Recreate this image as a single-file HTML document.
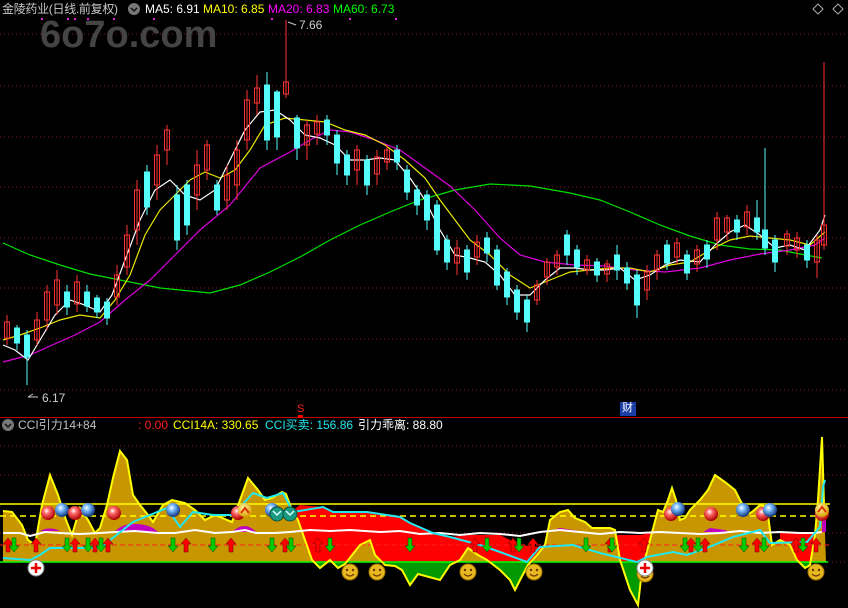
<!DOCTYPE html>
<html><head><meta charset="utf-8"><style>
html,body{margin:0;padding:0;background:#000;}
body{width:848px;height:608px;overflow:hidden;position:relative;font-family:"Liberation Sans","Noto Sans CJK SC",sans-serif;}
.t{position:absolute;font-size:12px;white-space:nowrap;line-height:14px;}
</style></head><body>
<svg width="848" height="608" style="position:absolute;left:0;top:0">
<defs>
<clipPath id="up"><rect x="0" y="420" width="848" height="142"/></clipPath>
<clipPath id="dn"><rect x="0" y="562" width="848" height="46"/></clipPath>
<radialGradient id="rb" cx="40%" cy="35%" r="65%"><stop offset="0" stop-color="#fff"/><stop offset=".35" stop-color="#f66"/><stop offset="1" stop-color="#a00"/></radialGradient>
<radialGradient id="bb" cx="40%" cy="35%" r="65%"><stop offset="0" stop-color="#fff"/><stop offset=".35" stop-color="#7bf"/><stop offset="1" stop-color="#137"/></radialGradient>
<radialGradient id="yb" cx="40%" cy="35%" r="65%"><stop offset="0" stop-color="#fff6a0"/><stop offset="1" stop-color="#d9a000"/></radialGradient>
<g id="smile"><circle r="8" fill="#e8b820" stroke="#a07000"/><circle cx="-3" cy="-2" r="1.2" fill="#630"/><circle cx="3" cy="-2" r="1.2" fill="#630"/><path d="M-4,2 Q0,6 4,2" stroke="#630" fill="none" stroke-width="1.2"/></g>
<g id="plus"><circle r="8" fill="#fff" stroke="#888"/><path d="M-5,0H5M0,-5V5" stroke="#e00" stroke-width="2.5"/></g>
<g id="ua"><path d="M0,-7 L5,-1 H2 V7 H-2 V-1 H-5Z" fill="#f00" stroke="#600" stroke-width=".5"/></g>
<g id="da"><path d="M0,7 L5,1 H2 V-7 H-2 V1 H-5Z" fill="#0c0" stroke="#040" stroke-width=".5"/></g>
</defs>
<g stroke="#8a1a1a" stroke-dasharray="1 3">
<line x1="0" y1="34" x2="848" y2="34"/><line x1="0" y1="86" x2="848" y2="86"/><line x1="0" y1="137" x2="848" y2="137"/><line x1="0" y1="187" x2="848" y2="187"/><line x1="0" y1="238" x2="848" y2="238"/><line x1="0" y1="288" x2="848" y2="288"/><line x1="0" y1="339" x2="848" y2="339"/><line x1="0" y1="390" x2="848" y2="390"/>
<line x1="0" y1="446" x2="848" y2="446"/><line x1="0" y1="475" x2="848" y2="475"/><line x1="0" y1="533" x2="848" y2="533"/><line x1="0" y1="562" x2="848" y2="562"/>
</g>
<text x="40" y="47" font-family="Liberation Sans" font-weight="bold" font-size="38" fill="#444">6o7o.com</text>
<g fill="#e020e0"><rect x="41" y="18" width="2" height="2"/><rect x="67" y="18" width="2" height="2"/><rect x="74" y="18" width="2" height="2"/><rect x="87" y="18" width="2" height="2"/><rect x="113" y="18" width="2" height="2"/><rect x="153" y="18" width="2" height="2"/><rect x="271" y="18" width="2" height="2"/><rect x="349" y="18" width="2" height="2"/><rect x="395" y="18" width="2" height="2"/></g>
<polyline fill="none" stroke="#00e000" stroke-width="1.2" points="3,243 30,255 60,265 90,274 120,280 160,288 210,293 240,285 270,272 300,257 330,240 360,225 390,212 420,200 455,190 490,184 530,186 570,193 600,200 630,212 660,225 690,236 720,245 750,249 780,250 800,254 822,258"/>
<polyline fill="none" stroke="#e000e0" stroke-width="1.2" points="3,362 30,355 50,346 75,335 100,322 125,300 150,280 175,255 200,230 230,205 260,168 290,152 310,140 330,130 350,132 375,140 400,150 425,168 450,186 475,210 500,238 520,255 545,262 575,265 605,266 635,270 665,272 700,268 730,260 760,254 790,250 815,245 825,238"/>
<polyline fill="none" stroke="#e8e800" stroke-width="1.2" points="3,340 20,335 40,328 60,320 80,315 100,318 115,300 130,275 145,235 160,210 175,195 190,180 205,172 220,178 235,170 250,150 265,125 285,118 305,120 325,122 345,130 365,135 385,145 405,160 425,178 440,200 455,220 470,240 490,255 510,275 530,288 550,280 570,272 590,270 610,268 630,268 650,272 670,265 690,262 710,250 730,240 750,236 770,238 790,240 810,245 825,232"/>
<polyline fill="none" stroke="#fff" stroke-width="1.2" points="3,345 15,350 28,360 40,340 55,315 70,300 85,305 100,312 112,295 125,260 140,220 155,190 170,180 185,195 200,200 215,190 230,160 245,130 260,112 275,110 290,120 305,135 320,138 335,145 350,160 365,160 380,158 395,160 410,178 425,200 440,230 455,255 470,258 485,262 500,275 515,295 530,295 545,280 560,268 575,268 590,270 605,270 620,268 635,280 650,275 665,265 680,260 700,262 715,245 730,232 745,225 760,235 775,248 790,245 805,250 820,230 825,215"/>
<g stroke-width="1">
<g stroke="#ff3232" fill="none">
<line x1="7" y1="315" x2="7" y2="345"/><rect x="4.5" y="322" width="5" height="16"/>
<line x1="37" y1="312" x2="37" y2="345"/><rect x="34.5" y="320" width="5" height="20"/>
<line x1="47" y1="285" x2="47" y2="330"/><rect x="44.5" y="292" width="5" height="28"/>
<line x1="57" y1="270" x2="57" y2="315"/><rect x="54.5" y="280" width="5" height="25"/>
<line x1="77" y1="275" x2="77" y2="312"/><rect x="74.5" y="282" width="5" height="22"/>
<line x1="117" y1="265" x2="117" y2="305"/><rect x="114.5" y="275" width="5" height="22"/>
<line x1="127" y1="225" x2="127" y2="275"/><rect x="124.5" y="235" width="5" height="32"/>
<line x1="137" y1="180" x2="137" y2="245"/><rect x="134.5" y="190" width="5" height="40"/>
<line x1="157" y1="145" x2="157" y2="200"/><rect x="154.5" y="155" width="5" height="30"/>
<line x1="167" y1="125" x2="167" y2="165"/><rect x="164.5" y="130" width="5" height="20"/>
<line x1="197" y1="150" x2="197" y2="210"/><rect x="194.5" y="165" width="5" height="30"/>
<line x1="207" y1="140" x2="207" y2="180"/><rect x="204.5" y="145" width="5" height="25"/>
<line x1="227" y1="165" x2="227" y2="210"/><rect x="224.5" y="175" width="5" height="25"/>
<line x1="237" y1="140" x2="237" y2="200"/><rect x="234.5" y="150" width="5" height="35"/>
<line x1="247" y1="90" x2="247" y2="150"/><rect x="244.5" y="100" width="5" height="40"/>
<line x1="257" y1="75" x2="257" y2="115"/><rect x="254.5" y="88" width="5" height="15"/>
<line x1="286" y1="20" x2="286" y2="98"/><rect x="283.5" y="82" width="5" height="12"/>
<line x1="307" y1="120" x2="307" y2="160"/><rect x="304.5" y="125" width="5" height="20"/>
<line x1="317" y1="115" x2="317" y2="145"/><rect x="314.5" y="122" width="5" height="12"/>
<line x1="357" y1="145" x2="357" y2="185"/><rect x="354.5" y="150" width="5" height="20"/>
<line x1="377" y1="150" x2="377" y2="185"/><rect x="374.5" y="157" width="5" height="17"/>
<line x1="387" y1="145" x2="387" y2="170"/><rect x="384.5" y="150" width="5" height="12"/>
<line x1="457" y1="240" x2="457" y2="275"/><rect x="454.5" y="248" width="5" height="15"/>
<line x1="477" y1="235" x2="477" y2="265"/><rect x="474.5" y="242" width="5" height="15"/>
<line x1="537" y1="280" x2="537" y2="305"/><rect x="534.5" y="285" width="5" height="15"/>
<line x1="547" y1="258" x2="547" y2="285"/><rect x="544.5" y="262" width="5" height="15"/>
<line x1="557" y1="250" x2="557" y2="275"/><rect x="554.5" y="255" width="5" height="12"/>
<line x1="587" y1="255" x2="587" y2="275"/><rect x="584.5" y="260" width="5" height="10"/>
<line x1="607" y1="260" x2="607" y2="282"/><rect x="604.5" y="264" width="5" height="10"/>
<line x1="647" y1="265" x2="647" y2="300"/><rect x="644.5" y="272" width="5" height="18"/>
<line x1="657" y1="250" x2="657" y2="280"/><rect x="654.5" y="255" width="5" height="15"/>
<line x1="677" y1="238" x2="677" y2="265"/><rect x="674.5" y="243" width="5" height="14"/>
<line x1="697" y1="245" x2="697" y2="272"/><rect x="694.5" y="250" width="5" height="14"/>
<line x1="717" y1="212" x2="717" y2="250"/><rect x="714.5" y="218" width="5" height="22"/>
<line x1="727" y1="215" x2="727" y2="240"/><rect x="724.5" y="218" width="5" height="14"/>
<line x1="747" y1="205" x2="747" y2="235"/><rect x="744.5" y="212" width="5" height="15"/>
<line x1="787" y1="230" x2="787" y2="255"/><rect x="784.5" y="234" width="5" height="12"/>
<line x1="797" y1="232" x2="797" y2="258"/><rect x="794.5" y="238" width="5" height="12"/>
<line x1="817" y1="235" x2="817" y2="278"/><rect x="814.5" y="240" width="5" height="22"/>
<line x1="824" y1="62" x2="824" y2="250"/><rect x="821.5" y="225" width="5" height="20"/>
</g>
<g stroke="#54fcfc" fill="#54fcfc">
<line x1="17" y1="325" x2="17" y2="350"/><rect x="14.5" y="328" width="5" height="15"/>
<line x1="27" y1="330" x2="27" y2="385"/><rect x="24.5" y="335" width="5" height="22"/>
<line x1="67" y1="285" x2="67" y2="315"/><rect x="64.5" y="292" width="5" height="15"/>
<line x1="87" y1="285" x2="87" y2="312"/><rect x="84.5" y="292" width="5" height="14"/>
<line x1="97" y1="295" x2="97" y2="318"/><rect x="94.5" y="298" width="5" height="14"/>
<line x1="107" y1="298" x2="107" y2="325"/><rect x="104.5" y="302" width="5" height="16"/>
<line x1="147" y1="165" x2="147" y2="215"/><rect x="144.5" y="172" width="5" height="35"/>
<line x1="177" y1="185" x2="177" y2="250"/><rect x="174.5" y="195" width="5" height="45"/>
<line x1="187" y1="180" x2="187" y2="235"/><rect x="184.5" y="185" width="5" height="40"/>
<line x1="217" y1="180" x2="217" y2="215"/><rect x="214.5" y="185" width="5" height="25"/>
<line x1="267" y1="72" x2="267" y2="150"/><rect x="264.5" y="85" width="5" height="55"/>
<line x1="277" y1="90" x2="277" y2="150"/><rect x="274.5" y="92" width="5" height="45"/>
<line x1="297" y1="115" x2="297" y2="160"/><rect x="294.5" y="118" width="5" height="30"/>
<line x1="327" y1="115" x2="327" y2="145"/><rect x="324.5" y="120" width="5" height="15"/>
<line x1="337" y1="130" x2="337" y2="175"/><rect x="334.5" y="135" width="5" height="28"/>
<line x1="347" y1="150" x2="347" y2="185"/><rect x="344.5" y="155" width="5" height="20"/>
<line x1="367" y1="155" x2="367" y2="195"/><rect x="364.5" y="160" width="5" height="25"/>
<line x1="397" y1="145" x2="397" y2="170"/><rect x="394.5" y="150" width="5" height="12"/>
<line x1="407" y1="165" x2="407" y2="200"/><rect x="404.5" y="170" width="5" height="22"/>
<line x1="417" y1="185" x2="417" y2="215"/><rect x="414.5" y="190" width="5" height="15"/>
<line x1="427" y1="190" x2="427" y2="230"/><rect x="424.5" y="195" width="5" height="25"/>
<line x1="437" y1="200" x2="437" y2="255"/><rect x="434.5" y="205" width="5" height="45"/>
<line x1="447" y1="235" x2="447" y2="270"/><rect x="444.5" y="240" width="5" height="22"/>
<line x1="467" y1="245" x2="467" y2="280"/><rect x="464.5" y="250" width="5" height="22"/>
<line x1="487" y1="232" x2="487" y2="262"/><rect x="484.5" y="238" width="5" height="15"/>
<line x1="497" y1="245" x2="497" y2="290"/><rect x="494.5" y="250" width="5" height="35"/>
<line x1="507" y1="268" x2="507" y2="305"/><rect x="504.5" y="272" width="5" height="25"/>
<line x1="517" y1="285" x2="517" y2="320"/><rect x="514.5" y="290" width="5" height="22"/>
<line x1="527" y1="295" x2="527" y2="332"/><rect x="524.5" y="300" width="5" height="22"/>
<line x1="567" y1="230" x2="567" y2="265"/><rect x="564.5" y="235" width="5" height="20"/>
<line x1="577" y1="245" x2="577" y2="275"/><rect x="574.5" y="250" width="5" height="17"/>
<line x1="597" y1="258" x2="597" y2="282"/><rect x="594.5" y="262" width="5" height="13"/>
<line x1="617" y1="245" x2="617" y2="280"/><rect x="614.5" y="255" width="5" height="15"/>
<line x1="627" y1="262" x2="627" y2="290"/><rect x="624.5" y="268" width="5" height="15"/>
<line x1="637" y1="270" x2="637" y2="318"/><rect x="634.5" y="275" width="5" height="30"/>
<line x1="667" y1="240" x2="667" y2="270"/><rect x="664.5" y="245" width="5" height="18"/>
<line x1="687" y1="250" x2="687" y2="280"/><rect x="684.5" y="255" width="5" height="18"/>
<line x1="707" y1="240" x2="707" y2="268"/><rect x="704.5" y="245" width="5" height="14"/>
<line x1="737" y1="215" x2="737" y2="240"/><rect x="734.5" y="220" width="5" height="12"/>
<line x1="757" y1="200" x2="757" y2="240"/><rect x="754.5" y="218" width="5" height="14"/>
<line x1="765" y1="148" x2="765" y2="255"/><rect x="762.5" y="230" width="5" height="18"/>
<line x1="775" y1="235" x2="775" y2="272"/><rect x="772.5" y="240" width="5" height="22"/>
<line x1="807" y1="240" x2="807" y2="268"/><rect x="804.5" y="245" width="5" height="15"/>
</g>
</g>
<line x1="28" y1="397" x2="38" y2="397" stroke="#ccc"/><line x1="28" y1="397" x2="33" y2="394" stroke="#ccc"/>
<line x1="288" y1="22" x2="296" y2="25" stroke="#ccc"/>
<path d="M818,4 l5,5 -5,5 -5,-5z" fill="none" stroke="#aaa"/>
<path d="M838,4 l5,5 -5,5 -5,-5z" fill="none" stroke="#aaa"/>
<line x1="0" y1="417.5" x2="848" y2="417.5" stroke="#c00000"/>
<rect x="298" y="415" width="5" height="3" fill="#f00"/>
<rect x="620" y="402" width="16" height="14" fill="#1a3ea8"/>
<g clip-path="url(#dn)">
<polygon fill="#009900" points="3,562 3,511 12,512 22,525 28,540 35,545 42,505 50,475 58,495 66,520 72,535 80,508 88,520 95,533 100,528 107,505 113,478 120,451 127,460 133,495 140,505 148,515 153,522 163,505 172,500 185,503 195,510 205,520 215,515 232,522 240,500 248,478 258,490 265,500 272,498 282,492 286,494 292,510 298,520 305,540 312,560 320,568 330,560 338,568 345,564 360,545 370,540 375,555 385,565 395,566 402,570 410,585 418,574 440,580 450,565 460,560 468,548 478,555 487,560 500,570 510,580 515,590 520,580 528,565 537,555 545,545 550,520 560,512 568,510 575,518 585,522 592,528 602,528 610,528 615,530 620,560 630,590 638,605 642,570 650,540 658,510 663,512 668,500 672,488 676,500 680,520 685,518 690,510 700,500 708,490 715,475 725,482 735,490 740,500 748,514 752,512 760,505 764,506 768,515 772,545 780,540 790,545 797,560 805,568 810,565 815,535 818,500 822,437 824,505 826,562"/>
</g>
<polygon fill="#ff0000" points="290,512 300,505 323,507 333,512 367,512 400,517 410,523 433,533 450,537 470,535 500,535 520,545 540,547 560,533 600,535 640,535 650,533 660,533 660,562 290,562"/>
<polygon fill="#ff0000" points="780,533 815,533 815,562 780,562"/>
<g clip-path="url(#up)">
<polygon fill="#c89600" points="3,562 3,511 12,512 22,525 28,540 35,545 42,505 50,475 58,495 66,520 72,535 80,508 88,520 95,533 100,528 107,505 113,478 120,451 127,460 133,495 140,505 148,515 153,522 163,505 172,500 185,503 195,510 205,520 215,515 232,522 240,500 248,478 258,490 265,500 272,498 282,492 286,494 292,510 298,520 305,540 312,560 320,568 330,560 338,568 345,564 360,545 370,540 375,555 385,565 395,566 402,570 410,585 418,574 440,580 450,565 460,560 468,548 478,555 487,560 500,570 510,580 515,590 520,580 528,565 537,555 545,545 550,520 560,512 568,510 575,518 585,522 592,528 602,528 610,528 615,530 620,560 630,590 638,605 642,570 650,540 658,510 663,512 668,500 672,488 676,500 680,520 685,518 690,510 700,500 708,490 715,475 725,482 735,490 740,500 748,514 752,512 760,505 764,506 768,515 772,545 780,540 790,545 797,560 805,568 810,565 815,535 818,500 822,437 824,505 826,562"/>
</g>
<path d="M40,531 Q50,526 60,531Z M115,532 Q120,524 135,524 Q150,524 158,532Z M232,532 Q245,520 256,532Z M550,531 L560,528 L580,531Z M703,532 L710,528 L725,530 L730,532Z M822,532 L822,515 L826,515 L826,532Z" fill="#c000c0"/>
<line x1="0" y1="504" x2="830" y2="504" stroke="#ffff00" stroke-width="1.5"/>
<line x1="0" y1="516" x2="830" y2="516" stroke="#ffff00" stroke-width="1.5" stroke-dasharray="6 4"/>
<line x1="0" y1="545" x2="830" y2="545" stroke="#ff2020" stroke-width="1" stroke-dasharray="5 3"/>
<line x1="0" y1="562" x2="828" y2="562" stroke="#00ff00" stroke-width="1.5"/>
<polyline fill="none" stroke="#ffff00" stroke-width="2" points="3,511 12,512 22,525 28,540 35,545 42,505 50,475 58,495 66,520 72,535 80,508 88,520 95,533 100,528 107,505 113,478 120,451 127,460 133,495 140,505 148,515 153,522 163,505 172,500 185,503 195,510 205,520 215,515 232,522 240,500 248,478 258,490 265,500 272,498 282,492 286,494 292,510 298,520 305,540 312,560 320,568 330,560 338,568 345,564 360,545 370,540 375,555 385,565 395,566 402,570 410,585 418,574 440,580 450,565 460,560 468,548 478,555 487,560 500,570 510,580 515,590 520,580 528,565 537,555 545,545 550,520 560,512 568,510 575,518 585,522 592,528 602,528 610,528 615,530 620,560 630,590 638,605 642,570 650,540 658,510 663,512 668,500 672,488 676,500 680,520 685,518 690,510 700,500 708,490 715,475 725,482 735,490 740,500 748,514 752,512 760,505 764,506 768,515 772,545 780,540 790,545 797,560 805,568 810,565 815,535 818,500 822,437 824,505"/>
<polyline fill="none" stroke="#ffffff" stroke-width="2" points="3,533 20,533 30,536 45,532 60,533 80,534 100,533 115,532 135,531 158,533 175,533 195,530 215,533 232,532 245,530 256,533 275,533 290,532 310,530 330,531 350,530 380,532 400,531 420,534 440,533 460,535 480,533 500,534 520,536 540,532 560,530 580,532 600,534 620,532 640,533 660,532 680,533 700,534 720,533 740,531 760,533 780,532 800,533 815,533 822,532"/>
<polyline fill="none" stroke="#22e8f0" stroke-width="2" points="3,558 30,560 40,555 50,548 100,548 133,522 167,508 180,527 193,512 213,515 233,515 253,493 267,498 283,493 293,512 323,507 333,512 367,512 400,517 410,523 433,533 450,537 480,545 500,552 527,562 540,547 573,545 600,553 637,562 647,557 673,552 687,555 707,548 733,537 760,530 770,543 807,542 820,527 823,487 825,480"/>
<use href="#ua" x="8" y="545"/><use href="#da" x="14" y="545"/><use href="#ua" x="36" y="545"/><use href="#da" x="67" y="545"/><use href="#ua" x="75" y="545"/><use href="#da" x="88" y="545"/><use href="#ua" x="95" y="545"/><use href="#da" x="101" y="545"/><use href="#ua" x="108" y="545"/><use href="#da" x="173" y="545"/><use href="#ua" x="186" y="545"/><use href="#da" x="213" y="545"/><use href="#ua" x="231" y="545"/><use href="#da" x="272" y="545"/><use href="#ua" x="285" y="545"/><use href="#da" x="291" y="545"/><use href="#ua" x="318" y="545"/><use href="#da" x="330" y="545"/><use href="#da" x="410" y="545"/><use href="#ua" x="475" y="545"/><use href="#da" x="487" y="545"/><use href="#ua" x="513" y="545"/><use href="#da" x="519" y="545"/><use href="#ua" x="533" y="545"/><use href="#da" x="586" y="545"/><use href="#ua" x="610" y="545"/><use href="#da" x="612" y="545"/><use href="#ua" x="644" y="545"/><use href="#da" x="685" y="545"/><use href="#ua" x="691" y="545"/><use href="#da" x="698" y="545"/><use href="#ua" x="705" y="545"/><use href="#da" x="744" y="545"/><use href="#ua" x="757" y="545"/><use href="#da" x="764" y="545"/><use href="#ua" x="796" y="545"/><use href="#da" x="803" y="545"/><use href="#ua" x="816" y="545"/>
<circle cx="48" cy="513" r="7" fill="url(#rb)"/><circle cx="62" cy="510" r="7" fill="url(#bb)"/><circle cx="75" cy="513" r="7" fill="url(#rb)"/><circle cx="88" cy="510" r="7" fill="url(#bb)"/><circle cx="114" cy="513" r="7" fill="url(#rb)"/><circle cx="173" cy="510" r="7" fill="url(#bb)"/>
<circle cx="238" cy="513" r="7" fill="url(#rb)"/><circle cx="245" cy="510" r="7" fill="url(#yb)"/><path d="M241,513 l4,-5 4,5" stroke="#e03000" stroke-width="2" fill="none"/>
<circle cx="272" cy="510" r="7" fill="url(#bb)"/><circle cx="277" cy="514" r="7" fill="#1a9a80" stroke="#0a5040"/><circle cx="290" cy="514" r="7" fill="#1a9a80" stroke="#0a5040"/><path d="M273,511 l4,4 4,-4 M286,511 l4,4 4,-4" stroke="#dff" stroke-width="1.5" fill="none"/>
<circle cx="671" cy="514" r="7" fill="url(#rb)"/><circle cx="678" cy="509" r="7" fill="url(#bb)"/><circle cx="711" cy="514" r="7" fill="url(#rb)"/><circle cx="743" cy="510" r="7" fill="url(#bb)"/><circle cx="763" cy="514" r="7" fill="url(#rb)"/><circle cx="770" cy="510" r="7" fill="url(#bb)"/>
<circle cx="822" cy="514" r="7" fill="url(#rb)"/><circle cx="822" cy="510" r="7" fill="url(#yb)"/><path d="M818,512 l4,-5 4,5" stroke="#e03000" stroke-width="2" fill="none"/>
<use href="#smile" x="350" y="572"/><use href="#smile" x="377" y="572"/><use href="#smile" x="468" y="572"/><use href="#smile" x="534" y="572"/><use href="#smile" x="645" y="574"/><use href="#smile" x="816" y="572"/>
<use href="#plus" x="36" y="568"/><use href="#plus" x="645" y="568"/>
<circle cx="134" cy="9" r="6" fill="#777"/><path d="M131,8 l3,3 3,-3" stroke="#111" stroke-width="1.5" fill="none"/>
<circle cx="8" cy="425" r="6" fill="#777"/><path d="M5,424 l3,3 3,-3" stroke="#111" stroke-width="1.5" fill="none"/>
</svg>
<div class="t" style="left:2px;top:2px;color:#c8c8c8;letter-spacing:-0.3px">金陵药业(日线.前复权)</div>
<div class="t" style="left:145px;top:2px;color:#fff">MA5: 6.91</div>
<div class="t" style="left:203px;top:2px;color:#ffff00">MA10: 6.85</div>
<div class="t" style="left:268px;top:2px;color:#ff00ff">MA20: 6.83</div>
<div class="t" style="left:333px;top:2px;color:#00ff00">MA60: 6.73</div>
<div class="t" style="left:299px;top:18px;color:#ccc">7.66</div>
<div class="t" style="left:42px;top:391px;color:#ccc">6.17</div>
<div class="t" style="left:297px;top:402px;color:#ff2020;font-size:11px">S</div>
<div class="t" style="left:622px;top:401px;color:#fff;font-size:11px">财</div>
<div class="t" style="left:18px;top:418px;color:#c0c0c0">CCI引力14+84</div>
<div class="t" style="left:138px;top:418px;color:#ff2020">: 0.00</div>
<div class="t" style="left:173px;top:418px;color:#ffff00">CCI14A: 330.65</div>
<div class="t" style="left:265px;top:418px;color:#22e8f0">CCI买卖: 156.86</div>
<div class="t" style="left:358px;top:418px;color:#fff">引力乖离: 88.80</div>
</body></html>
